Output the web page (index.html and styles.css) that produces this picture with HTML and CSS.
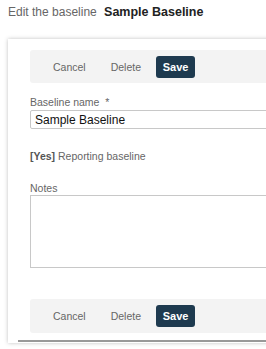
FILE: index.html
```html
<!DOCTYPE html>
<html lang="en">
<head>
  <meta charset="UTF-8">
  <title>Edit the baseline</title>
  <link rel="stylesheet" href="styles.css">
</head>
<body>
  <h1 class="page-title">Edit the baseline <strong>Sample Baseline</strong></h1>

  <div class="edit-card">
    <div class="toolbar">
      <button class="link-btn">Cancel</button>
      <button class="link-btn">Delete</button>
      <button class="save-btn">Save</button>
    </div>

    <label class="field-label">Baseline name&nbsp; *</label>
    <input class="text-input" type="text" value="Sample Baseline">

    <p class="reporting"><b>[Yes]</b> Reporting baseline</p>

    <label class="field-label notes-label">Notes</label>
    <textarea class="notes-input"></textarea>

    <div class="toolbar bottom">
      <button class="link-btn">Cancel</button>
      <button class="link-btn">Delete</button>
      <button class="save-btn">Save</button>
    </div>
    <div class="card-rule"></div>
  </div>
</body>
</html>
```

FILE: styles.css
```css
body {
  font-family: "Liberation Sans", Arial, sans-serif;
  margin: 0;
  width: 266px;
  height: 349px;
  overflow: hidden;
  background: white;
  color: #333;
}
.page-title {
  font-size: 12px;
  line-height: 14px;
  font-weight: normal;
  color: #666;
  margin: 5px 0 0 8px;
  white-space: nowrap;
}
.page-title strong {
  font-size: 12.5px;
  color: #222;
  margin-left: 4px;
}
.edit-card {
  margin: 20px 0 0 8px;
  width: 300px;
  height: 304px;
  background: white;
  box-shadow: 0 0 4px rgba(0, 0, 0, 0.25);
  padding: 11px 0 0 22px;
  box-sizing: border-box;
  position: relative;
}
.toolbar {
  background: #f3f3f3;
  height: 33px;
  border-radius: 3px;
  display: flex;
  align-items: center;
  padding-left: 23px;
}
.toolbar.bottom {
  margin-top: 31px;
  height: 34px;
}
.link-btn {
  background: none;
  border: none;
  font-family: inherit;
  font-size: 10.5px;
  color: #666;
  padding: 0;
  margin-right: 25px;
}
.save-btn {
  background: #1e3a4f;
  color: white;
  font-family: inherit;
  font-weight: bold;
  font-size: 11px;
  border: none;
  border-radius: 3px;
  width: 39px;
  height: 22px;
  padding: 0;
  margin-left: -10px;
}
.field-label {
  display: block;
  font-size: 10.5px;
  line-height: 13px;
  color: #666;
  margin-top: 13px;
}
.text-input {
  display: block;
  box-sizing: border-box;
  width: 100%;
  height: 19px;
  margin-top: 1px;
  border: 1px solid #c8c8c8;
  border-radius: 2px;
  font-family: inherit;
  font-size: 12px;
  color: #111;
  padding: 0 4px;
}
.reporting {
  font-size: 10.5px;
  line-height: 13px;
  color: #666;
  margin: 21px 0 0 0;
}
.reporting b {
  color: #555;
}
.notes-label {
  margin-top: 19px;
}
.notes-input {
  display: block;
  box-sizing: border-box;
  width: 100%;
  height: 73px;
  margin-top: 0;
  border: 1px solid #c8c8c8;
  resize: none;
}
.card-rule {
  position: absolute;
  left: 10px;
  right: 0;
  bottom: 1px;
  height: 2px;
  background: #999;
}
```
